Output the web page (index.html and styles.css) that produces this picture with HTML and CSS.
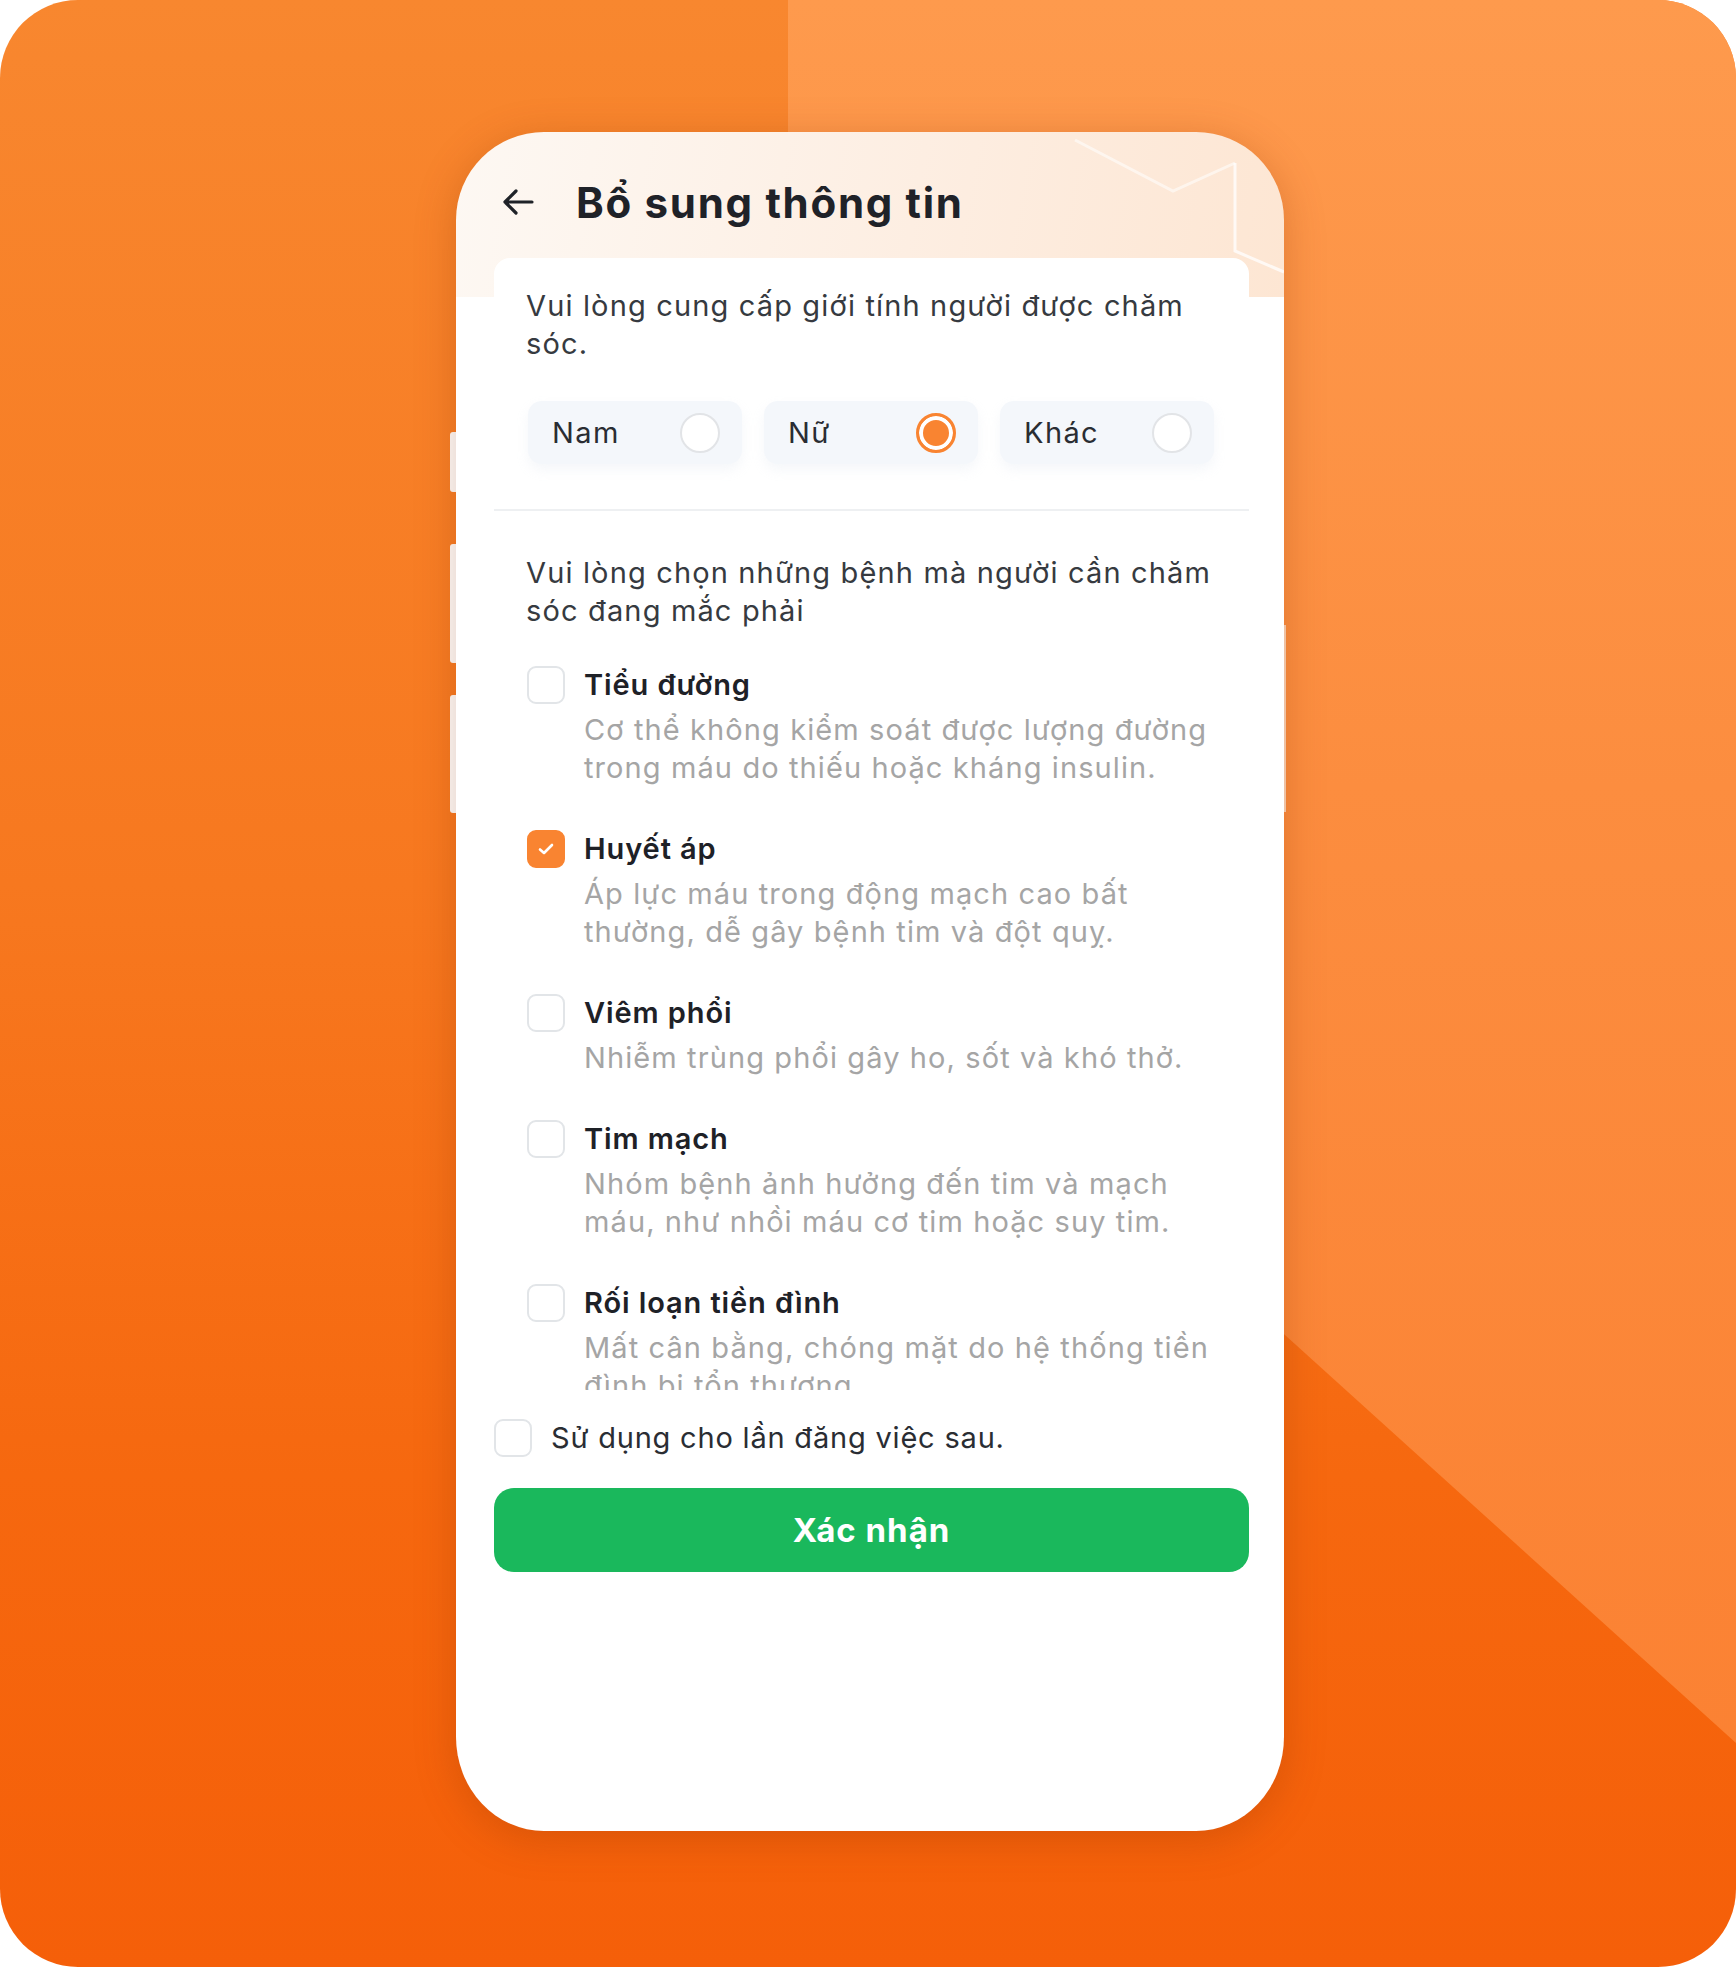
FILE: index.html
```html
<!DOCTYPE html>
<html lang="vi">
<head>
<meta charset="utf-8">
<title>Bổ sung thông tin</title>
<link rel="stylesheet" href="styles.css">
</head>
<body>
<div class="stage">
  <div class="device">
    <span class="side-btn side-btn-1"></span>
    <span class="side-btn side-btn-2"></span>
    <span class="side-btn side-btn-3"></span>
    <span class="side-btn-right"></span>
    <div class="phone">
      <svg class="header-deco" width="828" height="160" viewBox="0 0 828 160" fill="none">
        <polyline points="619,8 717,59 779,31" stroke="#ffffff" stroke-opacity="0.55" stroke-width="3"/>
        <polyline points="779,31 779,119 828,140" stroke="#ffffff" stroke-opacity="0.75" stroke-width="3"/>
      </svg>
      <header class="header">
        <svg class="back" width="32" height="28" viewBox="0 0 32 28" fill="none">
          <path d="M30 14H3M14 3L3 14L14 25" stroke="#1f2228" stroke-width="3.2" stroke-linecap="round" stroke-linejoin="round"/>
        </svg>
        <h1 class="title">Bổ sung thông tin</h1>
      </header>
      <div class="card">
        <div class="scroll">
          <p class="prompt">Vui lòng cung cấp giới tính người được chăm sóc.</p>
          <div class="genders">
            <div class="gender"><span>Nam</span><span class="radio"></span></div>
            <div class="gender"><span>Nữ</span><span class="radio radio-on"></span></div>
            <div class="gender"><span>Khác</span><span class="radio"></span></div>
          </div>
          <div class="divider"></div>
          <p class="prompt prompt-2">Vui lòng chọn những bệnh mà người cần chăm sóc đang mắc phải</p>
          <div class="list">
            <div class="item">
              <span class="check"></span>
              <div class="item-title">Tiểu đường</div>
              <div class="item-desc">Cơ thể không kiểm soát được lượng đường trong máu do thiếu hoặc kháng insulin.</div>
            </div>
            <div class="item">
              <span class="check check-on"><svg width="16" height="12" viewBox="0 0 16 12" fill="none"><path d="M2 6.5L6 10L14 2" stroke="#fff" stroke-width="2.6" stroke-linecap="round" stroke-linejoin="round"/></svg></span>
              <div class="item-title">Huyết áp</div>
              <div class="item-desc">Áp lực máu trong động mạch cao bất thường, dễ gây bệnh tim và đột quỵ.</div>
            </div>
            <div class="item">
              <span class="check"></span>
              <div class="item-title">Viêm phổi</div>
              <div class="item-desc">Nhiễm trùng phổi gây ho, sốt và khó thở.</div>
            </div>
            <div class="item">
              <span class="check"></span>
              <div class="item-title">Tim mạch</div>
              <div class="item-desc">Nhóm bệnh ảnh hưởng đến tim và mạch máu, như nhồi máu cơ tim hoặc suy tim.</div>
            </div>
            <div class="item">
              <span class="check"></span>
              <div class="item-title">Rối loạn tiền đình</div>
              <div class="item-desc">Mất cân bằng, chóng mặt do hệ thống tiền đình bị tổn thương.</div>
            </div>
          </div>
        </div>
        <div class="footer">
          <label class="remember"><span class="check"></span><span>Sử dụng cho lần đăng việc sau.</span></label>
          <button class="confirm">Xác nhận</button>
        </div>
      </div>
    </div>
  </div>
</div>
</body>
</html>
```
FILE: styles.css
```css
* { box-sizing: border-box; }
html, body { margin: 0; padding: 0; background: #ffffff; }
body { font-family: Inter, "Noto Sans", sans-serif; }

.stage {
  position: relative;
  width: 1736px;
  height: 1967px;
  border-radius: 78px;
  overflow: hidden;
  background: linear-gradient(180deg, #f8872f 0%, #f7781f 45%, #f6680f 75%, #f55f09 100%);
  padding: 132px 0 0 456px;
}
.stage::before {
  content: "";
  position: absolute;
  inset: 0;
  background: linear-gradient(180deg, #fe9a4d 0%, #fc8d3f 40%, #fb7f30 100%);
  clip-path: polygon(788px 0, 1736px 0, 1736px 1743px, 1285px 1335px, 788px 885px);
}

.device {
  position: relative;
  width: 828px;
  height: 1699px;
}
.side-btn {
  position: absolute;
  left: -6px;
  width: 8px;
  background: #ffffff;
  border-radius: 3px 0 0 3px;
}
.side-btn-1 { top: 300px; height: 60px; }
.side-btn-2 { top: 412px; height: 119px; }
.side-btn-3 { top: 563px; height: 118px; }
.side-btn-right {
  position: absolute;
  right: -2px;
  top: 493px;
  width: 2px;
  height: 187px;
  background: #fdd8bd;
}

.phone {
  position: relative;
  width: 828px;
  height: 1699px;
  border-radius: 88px 88px 88px 88px / 88px 88px 94px 94px;
  overflow: hidden;
  background:
    linear-gradient(100deg, #fdf8f3 0%, #fdeee2 55%, #fde6d3 100%) top left / 100% 165px no-repeat,
    #ffffff;
  box-shadow: 0 8px 40px rgba(140, 50, 0, 0.28);
}
.header-deco {
  position: absolute;
  top: 0;
  left: 0;
}

.header {
  position: relative;
  height: 126px;
  display: flex;
  align-items: center;
  padding: 14px 0 0 46px;
}
.back { flex: none; }
.title {
  margin: 0 0 0 42px;
  font-size: 42px;
  font-weight: 700;
  color: #1f2228;
  letter-spacing: 1.7px;
}

.card {
  position: relative;
  margin: 0 35px 0 38px;
  background: #ffffff;
  border-radius: 16px 16px 0 0;
}
.scroll {
  height: 1132px;
  overflow: hidden;
  padding: 29px 12px 0 32px;
}
.prompt {
  margin: 0;
  font-size: 29px;
  line-height: 38px;
  color: #363a40;
  letter-spacing: 1.15px;
}
.genders {
  margin-top: 38px;
  padding: 0 23px 0 2px;
  display: grid;
  grid-template-columns: repeat(3, 1fr);
  gap: 22px;
}
.gender {
  height: 63px;
  display: flex;
  align-items: center;
  justify-content: space-between;
  padding: 0 22px 0 24px;
  background: #f4f7fb;
  border-radius: 14px;
  box-shadow: 0 6px 12px rgba(200, 210, 225, 0.18);
  font-size: 29px;
  color: #2a2d33;
  letter-spacing: 1.4px;
}
.radio {
  width: 40px;
  height: 40px;
  border-radius: 50%;
  border: 2px solid #e2e4e7;
  background: #ffffff;
}
.radio-on {
  border: 3px solid #f98431;
  background: #f98431;
  box-shadow: inset 0 0 0 4px #ffffff;
}
.divider {
  margin: 45px -12px 0 -32px;
  height: 2px;
  background: #eef0f2;
}
.prompt-2 { margin-top: 43px; }

.list {
  margin-top: 36px;
  display: flex;
  flex-direction: column;
  gap: 43px;
}
.item {
  display: grid;
  grid-template-columns: 38px 632px;
  column-gap: 19px;
  row-gap: 7px;
  padding-left: 1px;
}
.check {
  flex: none;
  width: 38px;
  height: 38px;
  border: 2px solid #e2e5e8;
  border-radius: 9px;
  background: #ffffff;
  display: flex;
  align-items: center;
  justify-content: center;
}
.check-on {
  border-color: #f98431;
  background: #f98431;
}
.item .check { grid-column: 1; grid-row: 1; }
.item-title {
  grid-column: 2;
  grid-row: 1;
  font-size: 29px;
  line-height: 38px;
  font-weight: 600;
  color: #1e2127;
  letter-spacing: 0.9px;
}
.item-desc {
  grid-column: 2;
  grid-row: 2;
  font-size: 29px;
  line-height: 38px;
  color: #a5a5a5;
  letter-spacing: 1.1px;
}

.footer {
  padding-top: 29px;
}
.remember {
  display: flex;
  align-items: center;
  gap: 19px;
  font-size: 29px;
  line-height: 38px;
  color: #2a2d33;
  letter-spacing: 0.8px;
}
.confirm {
  display: block;
  width: 100%;
  height: 84px;
  margin-top: 31px;
  border: none;
  border-radius: 20px;
  background: #1ab85c;
  color: #ffffff;
  font-family: Inter, "Noto Sans", sans-serif;
  font-size: 33px;
  font-weight: 700;
  letter-spacing: 1px;
}
```
